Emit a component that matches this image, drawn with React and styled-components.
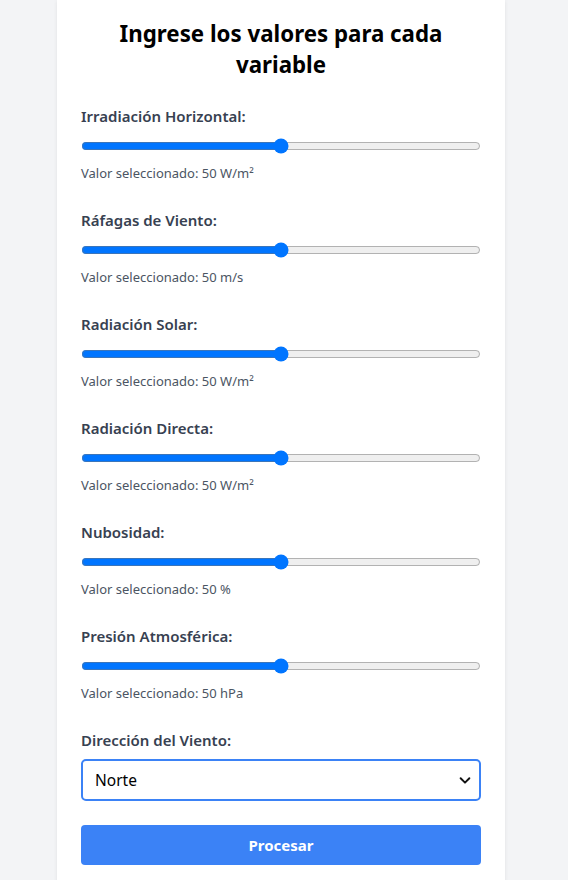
import React, { useState } from 'react';
import styled, { createGlobalStyle } from 'styled-components';

// ─── Global ───────────────────────────────────────────────────────────────────

const GlobalStyle = createGlobalStyle`
  html, body {
    margin: 0;
    padding: 0;
    background: #f3f4f6;
    font-family: "Noto Sans", "Open Sans", sans-serif;
  }
  * { box-sizing: border-box; }
`;

// ─── Layout ───────────────────────────────────────────────────────────────────

const Page = styled.div`
  min-height: 100vh;
  display: flex;
  justify-content: center;
  padding-right: 6px;
`;

const Card = styled.div`
  width: 448px;
  background: #ffffff;
  padding: 18px 24px 24px;
  box-shadow: 0 1px 4px rgba(0, 0, 0, 0.08);
`;

const Title = styled.h2`
  margin: 0 0 26px;
  font-size: 22.3px;
  line-height: 31px;
  font-weight: 700;
  text-align: center;
  color: #000;
`;

// ─── Fields ───────────────────────────────────────────────────────────────────

const Field = styled.div`
  display: flex;
  flex-direction: column;
  margin-bottom: ${({ $last }) => ($last ? '24px' : '28px')};
`;

const Label = styled.label`
  font-size: 15px;
  line-height: 20px;
  font-weight: 600;
  color: #374151;
  margin-bottom: ${({ $tight }) => ($tight ? '9px' : '12px')};
`;

const Range = styled.input`
  display: block;
  width: 100%;
  height: 16px;
  margin: 0;
`;

const Hint = styled.p`
  margin: 10px 0 0;
  font-size: 13px;
  line-height: 18px;
  color: #4b5563;
`;

const SelectWrap = styled.div`
  position: relative;
`;

const Select = styled.select`
  appearance: none;
  width: 100%;
  height: 42px;
  padding: 0 36px 0 12px;
  font-family: inherit;
  font-size: 15.5px;
  color: #000;
  background: #fff;
  border: 2px solid #3b82f6;
  border-radius: 5px;
  outline: none;
`;

const Chevron = styled.svg`
  position: absolute;
  right: 9px;
  top: 50%;
  transform: translateY(-50%);
  pointer-events: none;
`;

const Button = styled.button`
  width: 100%;
  height: 40px;
  border: none;
  border-radius: 4px;
  background: #3b82f6;
  color: #fff;
  font-family: inherit;
  font-size: 15px;
  font-weight: 700;
  cursor: pointer;
`;

// ─── Data ─────────────────────────────────────────────────────────────────────

const VARIABLES = [
  { id: 'irr', label: 'Irradiación Horizontal:', unit: 'W/m²' },
  { id: 'raf', label: 'Ráfagas de Viento:', unit: 'm/s' },
  { id: 'rad', label: 'Radiación Solar:', unit: 'W/m²' },
  { id: 'dir', label: 'Radiación Directa:', unit: 'W/m²' },
  { id: 'nub', label: 'Nubosidad:', unit: '%' },
  { id: 'pre', label: 'Presión Atmosférica:', unit: 'hPa' },
];

const DIRECTIONS = ['Norte', 'Sur', 'Este', 'Oeste'];

// ─── Component ────────────────────────────────────────────────────────────────

const App = () => {
  const [values, setValues] = useState(
    Object.fromEntries(VARIABLES.map((v) => [v.id, 50]))
  );
  const [direction, setDirection] = useState('Norte');

  return (
    <Page>
      <GlobalStyle />
      <Card>
        <Title>
          Ingrese los valores para cada
          <br />
          variable
        </Title>

        {VARIABLES.map(({ id, label, unit }) => (
          <Field key={id}>
            <Label htmlFor={id}>{label}</Label>
            <Range
              id={id}
              type="range"
              min="0"
              max="100"
              value={values[id]}
              onChange={(e) => setValues({ ...values, [id]: Number(e.target.value) })}
            />
            <Hint>
              Valor seleccionado: {values[id]} {unit}
            </Hint>
          </Field>
        ))}

        <Field $last>
          <Label htmlFor="wind" $tight>Dirección del Viento:</Label>
          <SelectWrap>
            <Select id="wind" value={direction} onChange={(e) => setDirection(e.target.value)}>
              {DIRECTIONS.map((d) => (
                <option key={d}>{d}</option>
              ))}
            </Select>
            <Chevron width="14" height="14" viewBox="0 0 16 16">
              <path d="M3 6l5 5 5-5" fill="none" stroke="#111" strokeWidth="2.2" strokeLinecap="round" strokeLinejoin="round" />
            </Chevron>
          </SelectWrap>
        </Field>

        <Button type="button">Procesar</Button>
      </Card>
    </Page>
  );
};

export default App;
